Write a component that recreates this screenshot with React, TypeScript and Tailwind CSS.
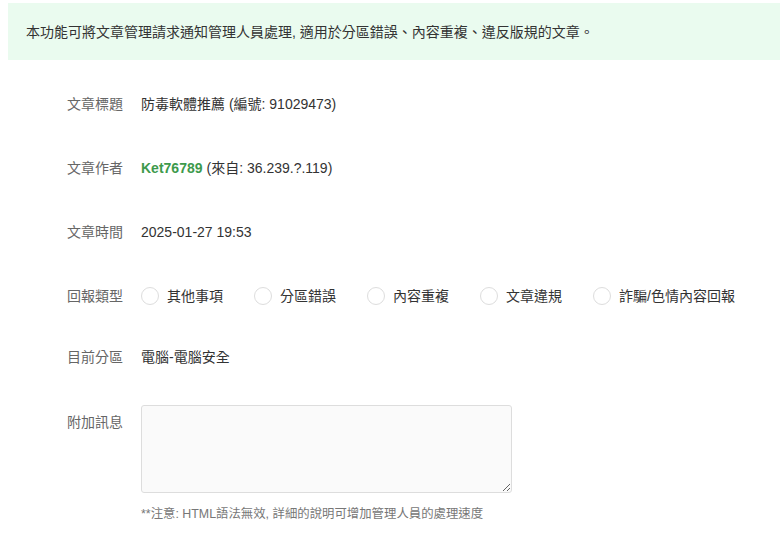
const FONT = "font-['Liberation_Sans','Noto_Sans_CJK_TC',sans-serif]";

const reportTypes = ["其他事項", "分區錯誤", "內容重複", "文章違規", "詐騙/色情內容回報"];

function Row({ label, children }: { label: string; children: React.ReactNode }) {
  return (
    <div className="flex h-[64px] items-center">
      <div className="w-[74px] shrink-0 text-[#666]">{label}</div>
      <div className="flex items-center text-[#333]">{children}</div>
    </div>
  );
}

export default function App() {
  return (
    <div className={`${FONT} min-h-[549px] bg-white pl-2 pt-[3px] text-[14px] leading-5`}>
      <div className="flex h-[57px] items-center bg-[#eafbef] px-[18px] text-[#333]">
        本功能可將文章管理請求通知管理人員處理, 適用於分區錯誤、內容重複、違反版規的文章。
      </div>

      <form className="ml-[59px] mt-[12px]">
        <Row label="文章標題">防毒軟體推薦 (編號: 91029473)</Row>
        <Row label="文章作者">
          <span className="font-bold text-[#3d9a4c]">Ket76789</span>
          <span className="ml-1">(來自: 36.239.?.119)</span>
        </Row>
        <Row label="文章時間">2025-01-27 19:53</Row>
        <Row label="回報類型">
          {reportTypes.map((t) => (
            <label key={t} className="mr-[31px] flex cursor-pointer items-center">
              <input type="radio" name="type" className="peer sr-only" />
              <span className="h-[18px] w-[18px] rounded-full border border-[#ddd] bg-white" />
              <span className="ml-2">{t}</span>
            </label>
          ))}
        </Row>
        <div className="-mt-[3px]">
          <Row label="目前分區">電腦-電腦安全</Row>
        </div>

        <div className="flex pt-[16px]">
          <div className="mt-[7px] w-[74px] shrink-0 text-[#666]">附加訊息</div>
          <div>
            <textarea className="block h-[88px] w-[371px] rounded-[3px] border border-[#ddd] bg-[#fafafa] p-2 outline-none" />
            <p className="mt-[11px] text-[12.4px] text-[#777]">**注意: HTML語法無效, 詳細的說明可增加管理人員的處理速度</p>
          </div>
        </div>
      </form>
    </div>
  );
}
